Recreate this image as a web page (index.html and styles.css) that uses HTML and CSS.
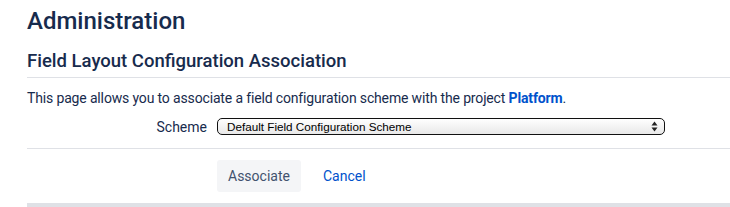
FILE: index.html
```html
<!DOCTYPE html>
<html lang="en">
<head>
  <meta charset="UTF-8">
  <meta name="viewport" content="width=device-width, initial-scale=1.0">
  <title>Field Layout Configuration Association</title>
  <link rel="stylesheet" href="styles.css">
</head>
<body>
  <div class="page">
    <h1>Administration</h1>
    <h2>Field Layout Configuration Association</h2>
    <p class="intro">This page allows you to associate a field configuration scheme with the project <a href="#">Platform</a>.</p>

    <form class="form">
      <div class="field-row">
        <label for="scheme">Scheme</label>
        <div class="select-wrap">
          <select id="scheme" class="select">
            <option>Default Field Configuration Scheme</option>
          </select>
          <svg class="select-arrow" width="7" height="11" viewBox="0 0 7 11">
            <path d="M3.5 0.5 L6.5 4.5 L0.5 4.5 Z" fill="#222"/>
            <path d="M3.5 10.5 L6.5 6.5 L0.5 6.5 Z" fill="#222"/>
          </svg>
        </div>
      </div>
      <div class="buttons">
        <button type="button" class="btn">Associate</button>
        <a href="#" class="cancel">Cancel</a>
      </div>
    </form>
    <div class="footer"></div>
  </div>
</body>
</html>
```

FILE: styles.css
```css
body {
  margin: 0;
  font-family: Roboto, "Liberation Sans", Arial, sans-serif;
  color: #172b4d;
  background-color: #fff;
}

.page {
  padding-left: 27px;
}

h1 {
  font-size: 24px;
  font-weight: 500;
  line-height: 28px;
  margin: 0;
  padding-top: 7px;
}

h2 {
  font-size: 18.5px;
  font-weight: 500;
  line-height: 24px;
  margin: 14px 0 0;
  padding-bottom: 4px;
  border-bottom: 1px solid #dfe1e6;
}

a {
  color: #0052cc;
  text-decoration: none;
}

.intro {
  font-size: 14px;
  line-height: 20px;
  letter-spacing: -0.15px;
  margin: 10px 0 0;
}

.intro a {
  font-weight: bold;
}

.form {
  margin-top: 10px;
}

.field-row {
  display: grid;
  grid-template-columns: 180px 448px;
  column-gap: 10px;
  align-items: center;
  padding-bottom: 13px;
  border-bottom: 1px solid #dfe1e6;
}

.field-row label {
  font-size: 14px;
  text-align: right;
}

.select-wrap {
  position: relative;
}

.select {
  appearance: none;
  -webkit-appearance: none;
  display: block;
  width: 100%;
  height: 17px;
  padding: 0 0 0 9px;
  border: 1px solid #111;
  border-radius: 5px;
  background: linear-gradient(#ffffff, #e8e8e8);
  font-family: "Liberation Sans", Arial, sans-serif;
  font-size: 11.7px;
  color: #000;
}

.select-arrow {
  position: absolute;
  right: 7px;
  top: 3px;
}

.buttons {
  display: flex;
  align-items: center;
  gap: 22px;
  padding: 11px 0 11px 190px;
}

.btn {
  background-color: #f4f5f7;
  color: #42526e;
  border: none;
  border-radius: 3px;
  height: 32px;
  padding: 0 11px;
  font-family: Roboto, "Liberation Sans", Arial, sans-serif;
  font-size: 14px;
  cursor: pointer;
}

.cancel {
  font-size: 14px;
}

.footer {
  border-top: 4px solid #dfe1e6;
  height: 10px;
}
```
